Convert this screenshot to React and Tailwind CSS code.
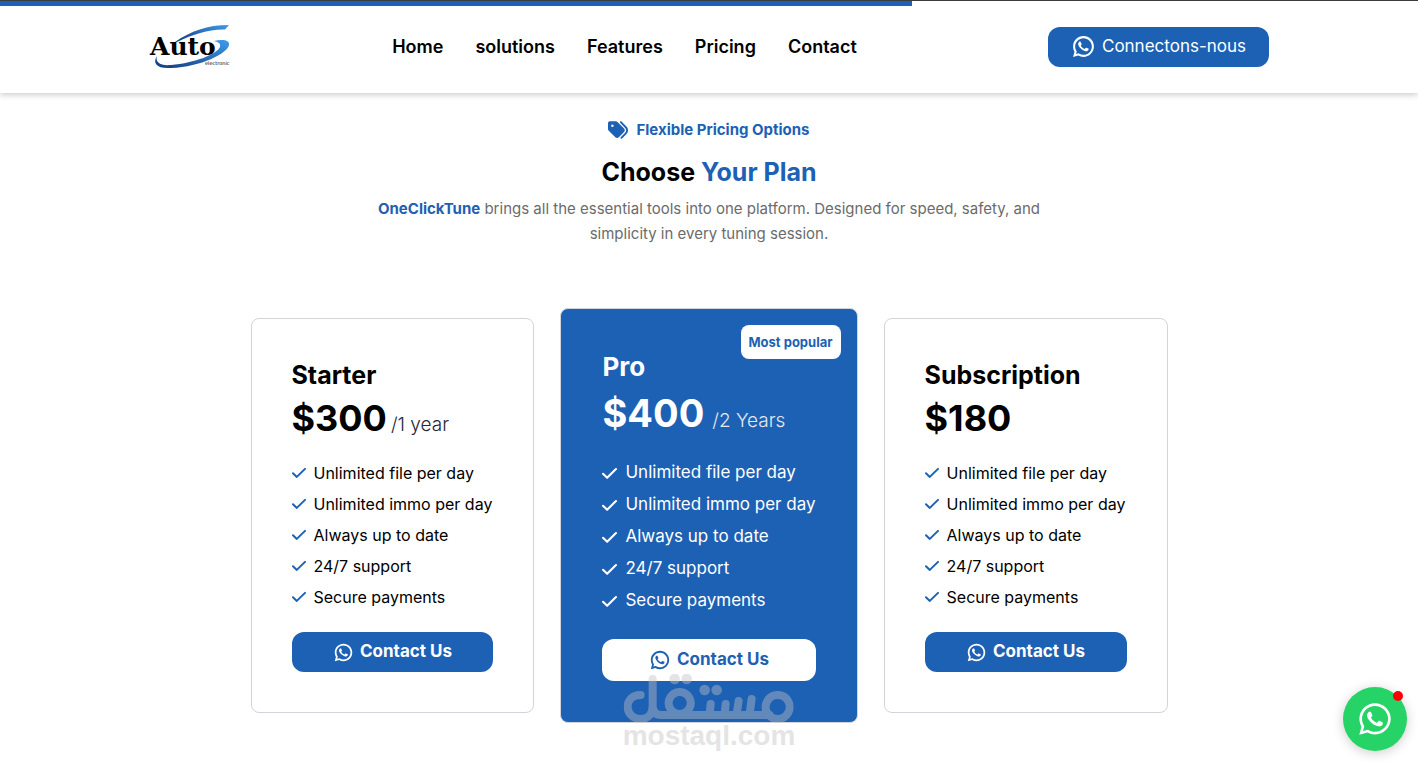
import { RiWhatsappLine } from "react-icons/ri";
import { FaTags, FaWhatsapp } from "react-icons/fa6";

const plans = [
  { name: "Starter", price: "$300", period: "/1 year" },
  { name: "Pro", price: "$400", period: "/2 Years", popular: true },
  { name: "Subscription", price: "$180" },
];

const features = [
  "Unlimited file per day",
  "Unlimited immo per day",
  "Always up to date",
  "24/7 support",
  "Secure payments",
];

const links = ["Home", "solutions", "Features", "Pricing", "Contact"];

function Logo() {
  return (
    <svg viewBox="0 0 84 44" className="h-11 w-21" role="img" aria-label="Auto electronic">
      <defs>
        <linearGradient id="swoosh" x1="0" y1="1" x2="1" y2="0">
          <stop offset="0" stopColor="#123a7c" />
          <stop offset="1" stopColor="#3f9bea" />
        </linearGradient>
      </defs>
      <path d="M26 17 C42 6 58 0 80 0 L76 4.5 C60 4 45 9 28 17 Z" fill="url(#swoosh)" />
      <path d="M65 16 C74 14 81 15 80 20 C79 28 52 42 22 43 C8 44 3 38 8 31 C6 37 11 41 22 40 C46 38 68 29 71 22 C72 18 69 17 65 16 Z" fill="url(#swoosh)" />
      <text x="1" y="30" fontFamily="DejaVu Serif, serif" fontWeight="700" fontSize="25">Auto</text>
      <text x="56" y="40" fontFamily="DejaVu Sans, sans-serif" fontSize="5">electronic</text>
    </svg>
  );
}

function CheckMark({ className }) {
  return (
    <svg viewBox="0 0 14 14" className={className} fill="none" stroke="currentColor" strokeWidth="2" strokeLinecap="round" strokeLinejoin="round" aria-hidden="true">
      <path d="M1 7.3 L4.8 10.9 L13 2.9" />
    </svg>
  );
}

function Watermark() {
  return (
    <div className="pointer-events-none absolute -bottom-[26px] left-1/2 flex -translate-x-1/2 flex-col items-center text-[#c1c1c1] opacity-42" aria-hidden="true">
      <svg viewBox="0 0 170 50" className="h-[50px] w-[170px]" fill="none" stroke="currentColor" strokeWidth="8" strokeLinecap="round" strokeLinejoin="round">
        <path d="M17 21 C8 21 4 27 4 33 C4 40 10 45 17 45 C24 45 29 40 29 32 V5 M29 32 C29 38 32 41 38 41 H146 M154 21 A12 12 0 1 0 154.1 21 M56 18 A11 11 0 1 0 56.1 18 M87 30 L86 40 M102 30 L101 40 M115 27 L113 40 M128 25 L126 40" />
        <g fill="currentColor" stroke="none">
          <circle cx="51" cy="5" r="5.3" /><circle cx="63" cy="5" r="5.3" />
          <circle cx="81" cy="16" r="5.3" /><circle cx="93" cy="16" r="5.3" />
        </g>
      </svg>
      <span className="font-['Liberation_Sans',sans-serif] text-[28px] leading-6 font-bold">mostaql.com</span>
    </div>
  );
}

function PlanCard({ plan }) {
  const pro = plan.popular;
  return (
    <article className={pro
      ? "relative rounded-lg border border-[#d1d5db] bg-[#1d61b4] px-[41px] pt-[38px] pb-[41px] text-white"
      : "relative rounded-lg border border-[#d1d5db] bg-white px-10 pt-[38px] pb-10 text-black"}>
      {pro && (
        <span className="absolute top-4 right-4 rounded-lg bg-white px-2 py-2 text-[13px] leading-[18px] font-bold text-[#1d61b4]">Most popular</span>
      )}
      <h3 className={pro ? "text-[26px] leading-10 font-bold" : "text-[25px] leading-9 font-bold"}>{plan.name}</h3>
      <p className={pro ? "flex h-[50px] items-baseline gap-2" : "flex h-12 items-baseline gap-1"}>
        <span className={pro ? "text-[38px] leading-[52px] font-bold" : "text-[36px] leading-[50px] font-bold"}>{plan.price}</span>
        {plan.period && (
          <span className={pro ? "text-[19px] font-light text-[#e5e7eb]" : "text-[19px] font-light text-[#1f2937]"}>{plan.period}</span>
        )}
      </p>
      <ul className={pro ? "mt-5 text-[17px]" : "mt-4 text-[16px]"}>
        {features.map((f) => (
          <li key={f} className={pro ? "flex h-8 items-center gap-2 whitespace-nowrap" : "flex h-[31px] items-center gap-2 whitespace-nowrap"}>
            <CheckMark className={pro ? "size-[15px] shrink-0" : "size-[14px] shrink-0 text-[#1d61b4]"} />
            {f}
          </li>
        ))}
      </ul>
      <button type="button" className={pro
        ? "mt-[22px] flex h-[42px] w-full items-center justify-center gap-[6px] rounded-xl bg-white text-[17px] font-bold text-[#1d61b4]"
        : "mt-5 flex h-10 w-full items-center justify-center gap-[6px] rounded-xl bg-[#1d61b4] text-[17px] font-bold text-white"}>
        <RiWhatsappLine aria-hidden="true" className={pro ? "size-[22px]" : "size-[21px]"} />
        Contact Us
      </button>
      {pro && <Watermark />}
    </article>
  );
}

export default function App() {
  return (
    <div className="min-h-screen bg-white font-[Inter,sans-serif] text-black">
      <header className="relative border-t border-[#3c3c3c] bg-white shadow-[0_2px_6px_rgba(0,0,0,0.2)]">
        <div className="h-[5px] w-[64.3%] bg-[#1d61b4]" />
        <div className="mx-auto flex h-[87px] max-w-[1120px] items-center justify-between pb-[6px]">
          <a href="#home" className="block"><Logo /></a>
          <nav className="mr-8 flex gap-8 text-[18px] font-semibold">
            {links.map((l) => <a key={l} href={`#${l.toLowerCase()}`}>{l}</a>)}
          </nav>
          <button type="button" className="flex h-10 items-center gap-[6px] rounded-xl bg-[#1d61b4] px-[23px] text-[17px] text-white">
            <RiWhatsappLine aria-hidden="true" className="size-[25px]" />
            Connectons-nous
          </button>
        </div>
      </header>

      <main id="pricing" className="px-4 pt-[25px]">
        <section className="mx-auto max-w-[680px] text-center">
          <p className="flex items-center justify-center gap-2 text-[15px] leading-6 font-bold text-[#1d61b4]">
            <FaTags aria-hidden="true" className="size-5" />
            Flexible Pricing Options
          </p>
          <h2 className="mt-3 text-[25px] leading-9 font-bold">Choose <span className="text-[#1d61b4]">Your Plan</span></h2>
          <p className="mt-[6px] text-[15px] leading-[25px] text-[#6b6b6b]">
            <b className="text-[#1d61b4]">OneClickTune</b> brings all the essential tools into one platform. Designed for speed, safety, and simplicity in every tuning session.
          </p>
        </section>
        <section className="mx-auto mt-[62px] grid max-w-[917px] grid-cols-[284fr_297fr_284fr] items-center gap-[26px]">
          {plans.map((p) => <PlanCard key={p.name} plan={p} />)}
        </section>
      </main>

      <a href="#whatsapp" aria-label="WhatsApp" className="fixed right-[11px] bottom-[13px] flex size-16 items-center justify-center rounded-full bg-[#25d366] text-white shadow-[0_2px_12px_rgba(0,0,0,0.2)]">
        <FaWhatsapp aria-hidden="true" className="size-9" />
        <span className="absolute top-1 right-1 size-[10px] rounded-full bg-[#ff0000]" />
      </a>
    </div>
  );
}
